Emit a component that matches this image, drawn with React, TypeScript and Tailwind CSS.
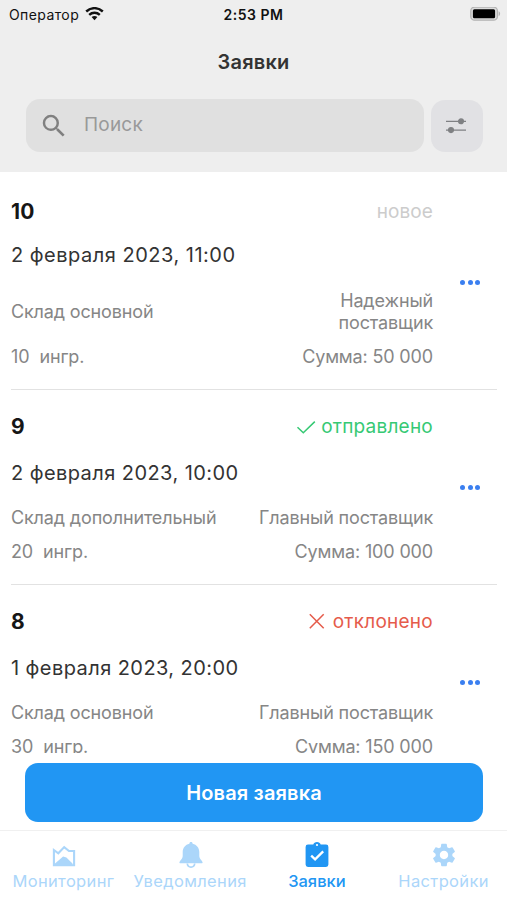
import type { ReactNode } from 'react';
import { MdSearch, MdSettings } from 'react-icons/md';

type Order = {
  id: string;
  status: ReactNode;
  date: ReactNode;
  store: ReactNode;
  supplier: ReactNode;
  count: string;
  sum: string;
  headClass: string;
  detailClass: string;
  moreClass: string;
};

const CheckIcon = () => (
  <svg className="h-[18px] w-5" viewBox="0 0 20 18" fill="none" stroke="currentColor" strokeWidth="1.5">
    <path d="M1.5 9.2 7.3 14.8 18.8 3.600" />
  </svg>
);

const CrossIcon = () => (
  <svg className="mr-0.5 h-[18px] w-[18px]" viewBox="0 0 18 18" fill="none" stroke="currentColor" strokeWidth="1.5">
    <path d="M1.800 1.300 15.700 15.300M15.700 1.300 1.800 15.300" />
  </svg>
);

const WifiIcon = () => (
  <svg className="h-[15px] w-[19px]" viewBox="0 0 19 15" fill="none" stroke="#111" strokeWidth="2.4">
    <path d="M1.2 4.500C6 0 13 0 17.8 4.500" />
    <path d="M4.2 7.800c3-2.800 7.600-2.800 10.600 0" />
    <path d="M6.600 10.100c1.700-1.500 4.100-1.500 5.800 0L9.500 13.200z" fill="#111" stroke="none" />
  </svg>
);

const BatteryIcon = () => (
  <svg className="h-[15px] w-[31px]" viewBox="0 0 31 15">
    <rect x=".8" y=".2" width="26.600" height="13" rx="3.800" fill="#dcdcdc" stroke="#b3b3b3" strokeWidth="1.300" />
    <rect x="2.900" y="2.200" width="22.200" height="9" rx="1.500" fill="#000" />
    <path d="M28.600 4.200v5c1.800-.7 2.200-4.300 0-5z" fill="#b3b3b3" />
  </svg>
);

const FilterIcon = () => (
  <svg className="mr-0.5 h-4 w-5" viewBox="0 0 20 16" fill="#7f8083" stroke="#7f8083" strokeWidth="1.300">
    <path d="M0 3.300h20M0 12.100h20" />
    <circle cx="15" cy="3.300" r="2.400" />
    <circle cx="5" cy="12.100" r="2.400" />
  </svg>
);

const MonitorIcon = () => (
  <svg className="ml-0.5 h-[26px] w-[26px]" viewBox="0 0 26 26">
    <path d="M2.900 8 7.300 11.300 13.200 5.100 18 9h5.100v14.200H2.900z" fill="none" stroke="currentColor" strokeWidth="2.100" />
    <path d="M4 21.500 12.100 14.600 15.400 15.600 21.500 21.500v2H4z" fill="currentColor" />
  </svg>
);

const BellIcon = () => (
  <svg className="ml-px h-[26px] w-[26px]" viewBox="0 0 26 26">
    <path
      d="M13 0c-1 0-1.600.7-1.600 1.700C7.300 2.500 4.700 5.900 4.700 10v4.200c0 2.600-2.700 4.100-3.200 5.700-.3.800.2 1.400 1 1.400h21c.8 0 1.300-.6 1-1.400-.5-1.600-3.200-3.100-3.200-5.700V10c0-4.100-2.600-7.500-6.700-8.300C14.600.7 14 0 13 0z"
      fill="currentColor"
    />
    <path d="M9.300 21.500c.2 2.300 1.700 3.600 3.700 3.600s3.500-1.300 3.700-3.600" fill="none" stroke="currentColor" strokeWidth="1.700" />
  </svg>
);

const ClipboardIcon = () => (
  <svg className="h-[26px] w-[26px]" viewBox="0 0 26 26">
    <path
      d="M4 2.500h5.300C9.700 1 11.200 0 13 0s3.300 1 3.700 2.500H22a2.400 2.400 0 0 1 2.400 2.400v17.600a2.400 2.400 0 0 1-2.400 2.400H4a2.400 2.400 0 0 1-2.400-2.400V4.900A2.400 2.400 0 0 1 4 2.500z"
      fill="currentColor"
    />
    <circle cx="13" cy="3" r="1.100" fill="#fff" />
    <path d="m7.200 13.600 3.900 3.800 8.100-8" fill="none" stroke="#fff" strokeWidth="2.300" />
  </svg>
);

const MoreDots = () => (
  <span className="flex gap-[2.300px]">
    <i className="size-[5px] rounded-full bg-[#3b7ff0]" />
    <i className="size-[5px] rounded-full bg-[#3b7ff0]" />
    <i className="size-[5px] rounded-full bg-[#3b7ff0]" />
  </span>
);

const orders: Order[] = [
  {
    id: '10',
    status: <span className="tracking-[0.1px] text-[#cccccc]">новое</span>,
    date: <span className="tracking-[0.5px]">2 февраля 2023, 11:00</span>,
    store: 'Склад основной',
    supplier: <>Надежный<br />поставщик</>,
    count: '10',
    sum: 'Сумма: 50 000',
    headClass: 'mt-[27px] mb-[17px]',
    detailClass: 'mt-[22px]',
    moreClass: 'pt-1',
  },
  {
    id: '9',
    status: <><CheckIcon /><span className="tracking-[0.23px]">отправлено</span></>,
    date: '2 февраля 2023, 10:00',
    store: 'Склад дополнительный',
    supplier: 'Главный поставщик',
    count: '20',
    sum: 'Сумма: 100 000',
    headClass: 'mt-6 mb-5 text-[#36c974]',
    detailClass: 'mt-[21px]',
    moreClass: 'pt-0',
  },
  {
    id: '8',
    status: <><CrossIcon /><span className="tracking-[0.25px]">отклонено</span></>,
    date: '1 февраля 2023, 20:00',
    store: 'Склад основной',
    supplier: 'Главный поставщик',
    count: '30',
    sum: 'Сумма: 150 000',
    headClass: 'mt-6 mb-5 text-[#e55b4b]',
    detailClass: 'mt-[21px]',
    moreClass: 'pt-px',
  },
];

const OrderRow = ({ order }: { order: Order }) => (
  <article className="mr-2.5 ml-[11px] flex shrink-0 border-b border-[#e2e2e2]">
    <div className="flex w-[422px] flex-col pb-[21px]">
      <div className={`flex h-[26px] items-center justify-between ${order.headClass}`}>
        <b className="text-[21px] font-bold tracking-[0.3px] text-[#161616]">{order.id}</b>
        <span className="flex items-center gap-[5px] text-[19px]">{order.status}</span>
      </div>
      <p className="h-[26px] text-[20px] leading-[26px] tracking-[0.43px] text-[#333]">{order.date}</p>
      <div className={`flex items-center justify-between text-[18px] leading-[22px] tracking-[-0.15px] text-[#868686] ${order.detailClass}`}>
        <span>{order.store}</span>
        <span className="text-right">{order.supplier}</span>
      </div>
      <div className="mt-3 flex justify-between text-[18px] leading-[22px] tracking-[-0.15px] text-[#868686]">
        <span className="flex gap-2.5"><span>{order.count}</span><span>ингр.</span></span>
        <span>{order.sum}</span>
      </div>
    </div>
    <button className={`flex flex-1 items-center justify-center pl-2.5 ${order.moreClass}`} aria-label="Действия">
      <MoreDots />
    </button>
  </article>
);

const Tab = ({ icon, label, active }: { icon: ReactNode; label: string; active?: boolean }) => (
  <div className={`flex flex-1 flex-col items-center pt-[11px] ${active ? 'text-[#2196f3]' : 'text-[#abd6fa]'}`}>
    <span className="flex h-[26px] items-center">{icon}</span>
    <span className={`mt-px text-[16.5px] leading-6 ${active ? 'font-medium' : 'tracking-[0.35px]'}`}>{label}</span>
  </div>
);

export default function App() {
  return (
    <main className="flex h-[900px] w-[507px] flex-col overflow-hidden bg-white font-['Inter','Liberation_Sans',sans-serif]">
      <header className="flex h-[172px] shrink-0 flex-col bg-[#eee]">
        <div className="grid h-7 grid-cols-3 items-center pr-1.5 pl-[9px] text-[14px] text-[#111]">
          <span className="flex items-center gap-1.5 tracking-[0.4px]">Оператор<WifiIcon /></span>
          <span className="pr-[3px] text-center font-semibold tracking-[0.5px]">2:53 PM</span>
          <span className="flex justify-end"><BatteryIcon /></span>
        </div>
        <h1 className="mt-[21px] text-center text-[20px] leading-[26px] font-semibold tracking-[0.2px] text-[#333]">Заявки</h1>
        <div className="mt-6 flex gap-[7px] pr-6 pl-[26px]">
          <div className="flex h-[53px] w-[398px] items-center rounded-[14px] bg-[#e0e0e0] pl-[13px] text-[19px] text-[#999]">
            <MdSearch className="size-[30px] text-[#808080]" />
            <span className="ml-[15px] tracking-[0.2px]">Поиск</span>
          </div>
          <button className="mt-px flex size-[52px] items-center justify-center rounded-[14px] bg-[#e1e1e4]" aria-label="Фильтр">
            <FilterIcon />
          </button>
        </div>
      </header>
      <section className="flex h-[581px] shrink-0 flex-col overflow-hidden">
        {orders.map((order) => <OrderRow key={order.id} order={order} />)}
      </section>
      <div className="h-[77px] shrink-0 pr-6 pl-[25px]">
        <button className="mt-2.5 h-[59px] w-full rounded-[13px] bg-[#2196f3] text-[20px] font-semibold tracking-[0.15px] text-white">Новая заявка</button>
      </div>
      <nav className="flex h-[70px] border-t border-[#f0f0f0]">
        <Tab icon={<MonitorIcon />} label="Мониторинг" />
        <Tab icon={<BellIcon />} label="Уведомления" />
        <Tab icon={<ClipboardIcon />} label="Заявки" active />
        <Tab icon={<MdSettings className="size-7" />} label="Настройки" />
      </nav>
    </main>
  );
}
